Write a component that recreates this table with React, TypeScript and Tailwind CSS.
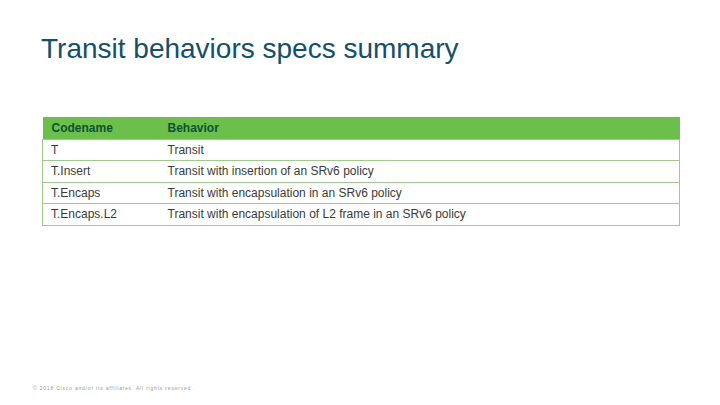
const ROWS = [
  ["T", "Transit"],
  ["T.Insert", "Transit with insertion of an SRv6 policy"],
  ["T.Encaps", "Transit with encapsulation in an SRv6 policy"],
  ["T.Encaps.L2", "Transit with encapsulation of L2 frame in an SRv6 policy"],
];

export default function App() {
  return (
    <div className="relative h-[405px] w-[720px] overflow-hidden bg-white font-['Liberation_Sans',Arial,sans-serif]">
      <h1 className="pl-[41px] pt-[31px] text-[28px] leading-[36px] text-[#14506a]">
        Transit behaviors specs summary
      </h1>

      <table className="ml-[42px] mt-[50px] w-[638px] border-collapse text-[12px] text-[#3a3a3a]">
        <thead>
          <tr className="h-[22px] bg-[#6cbf4b]">
            <th className="w-[118px] pl-[9px] text-left font-bold text-[#0b5233]">Codename</th>
            <th className="pl-[7px] text-left font-bold text-[#0b5233]">Behavior</th>
          </tr>
        </thead>
        <tbody>
          {ROWS.map(([code, behavior]) => (
            <tr key={code} className="h-[21.5px] border border-[#9fc98e]">
              <td className="pl-[8px]">{code}</td>
              <td className="pl-[7px]">{behavior}</td>
            </tr>
          ))}
        </tbody>
      </table>

      <p className="absolute left-[33px] top-[385px] text-[5px] tracking-[0.8px] text-[#999]">
        © 2018 Cisco and/or its affiliates. All rights reserved.
      </p>
    </div>
  );
}
